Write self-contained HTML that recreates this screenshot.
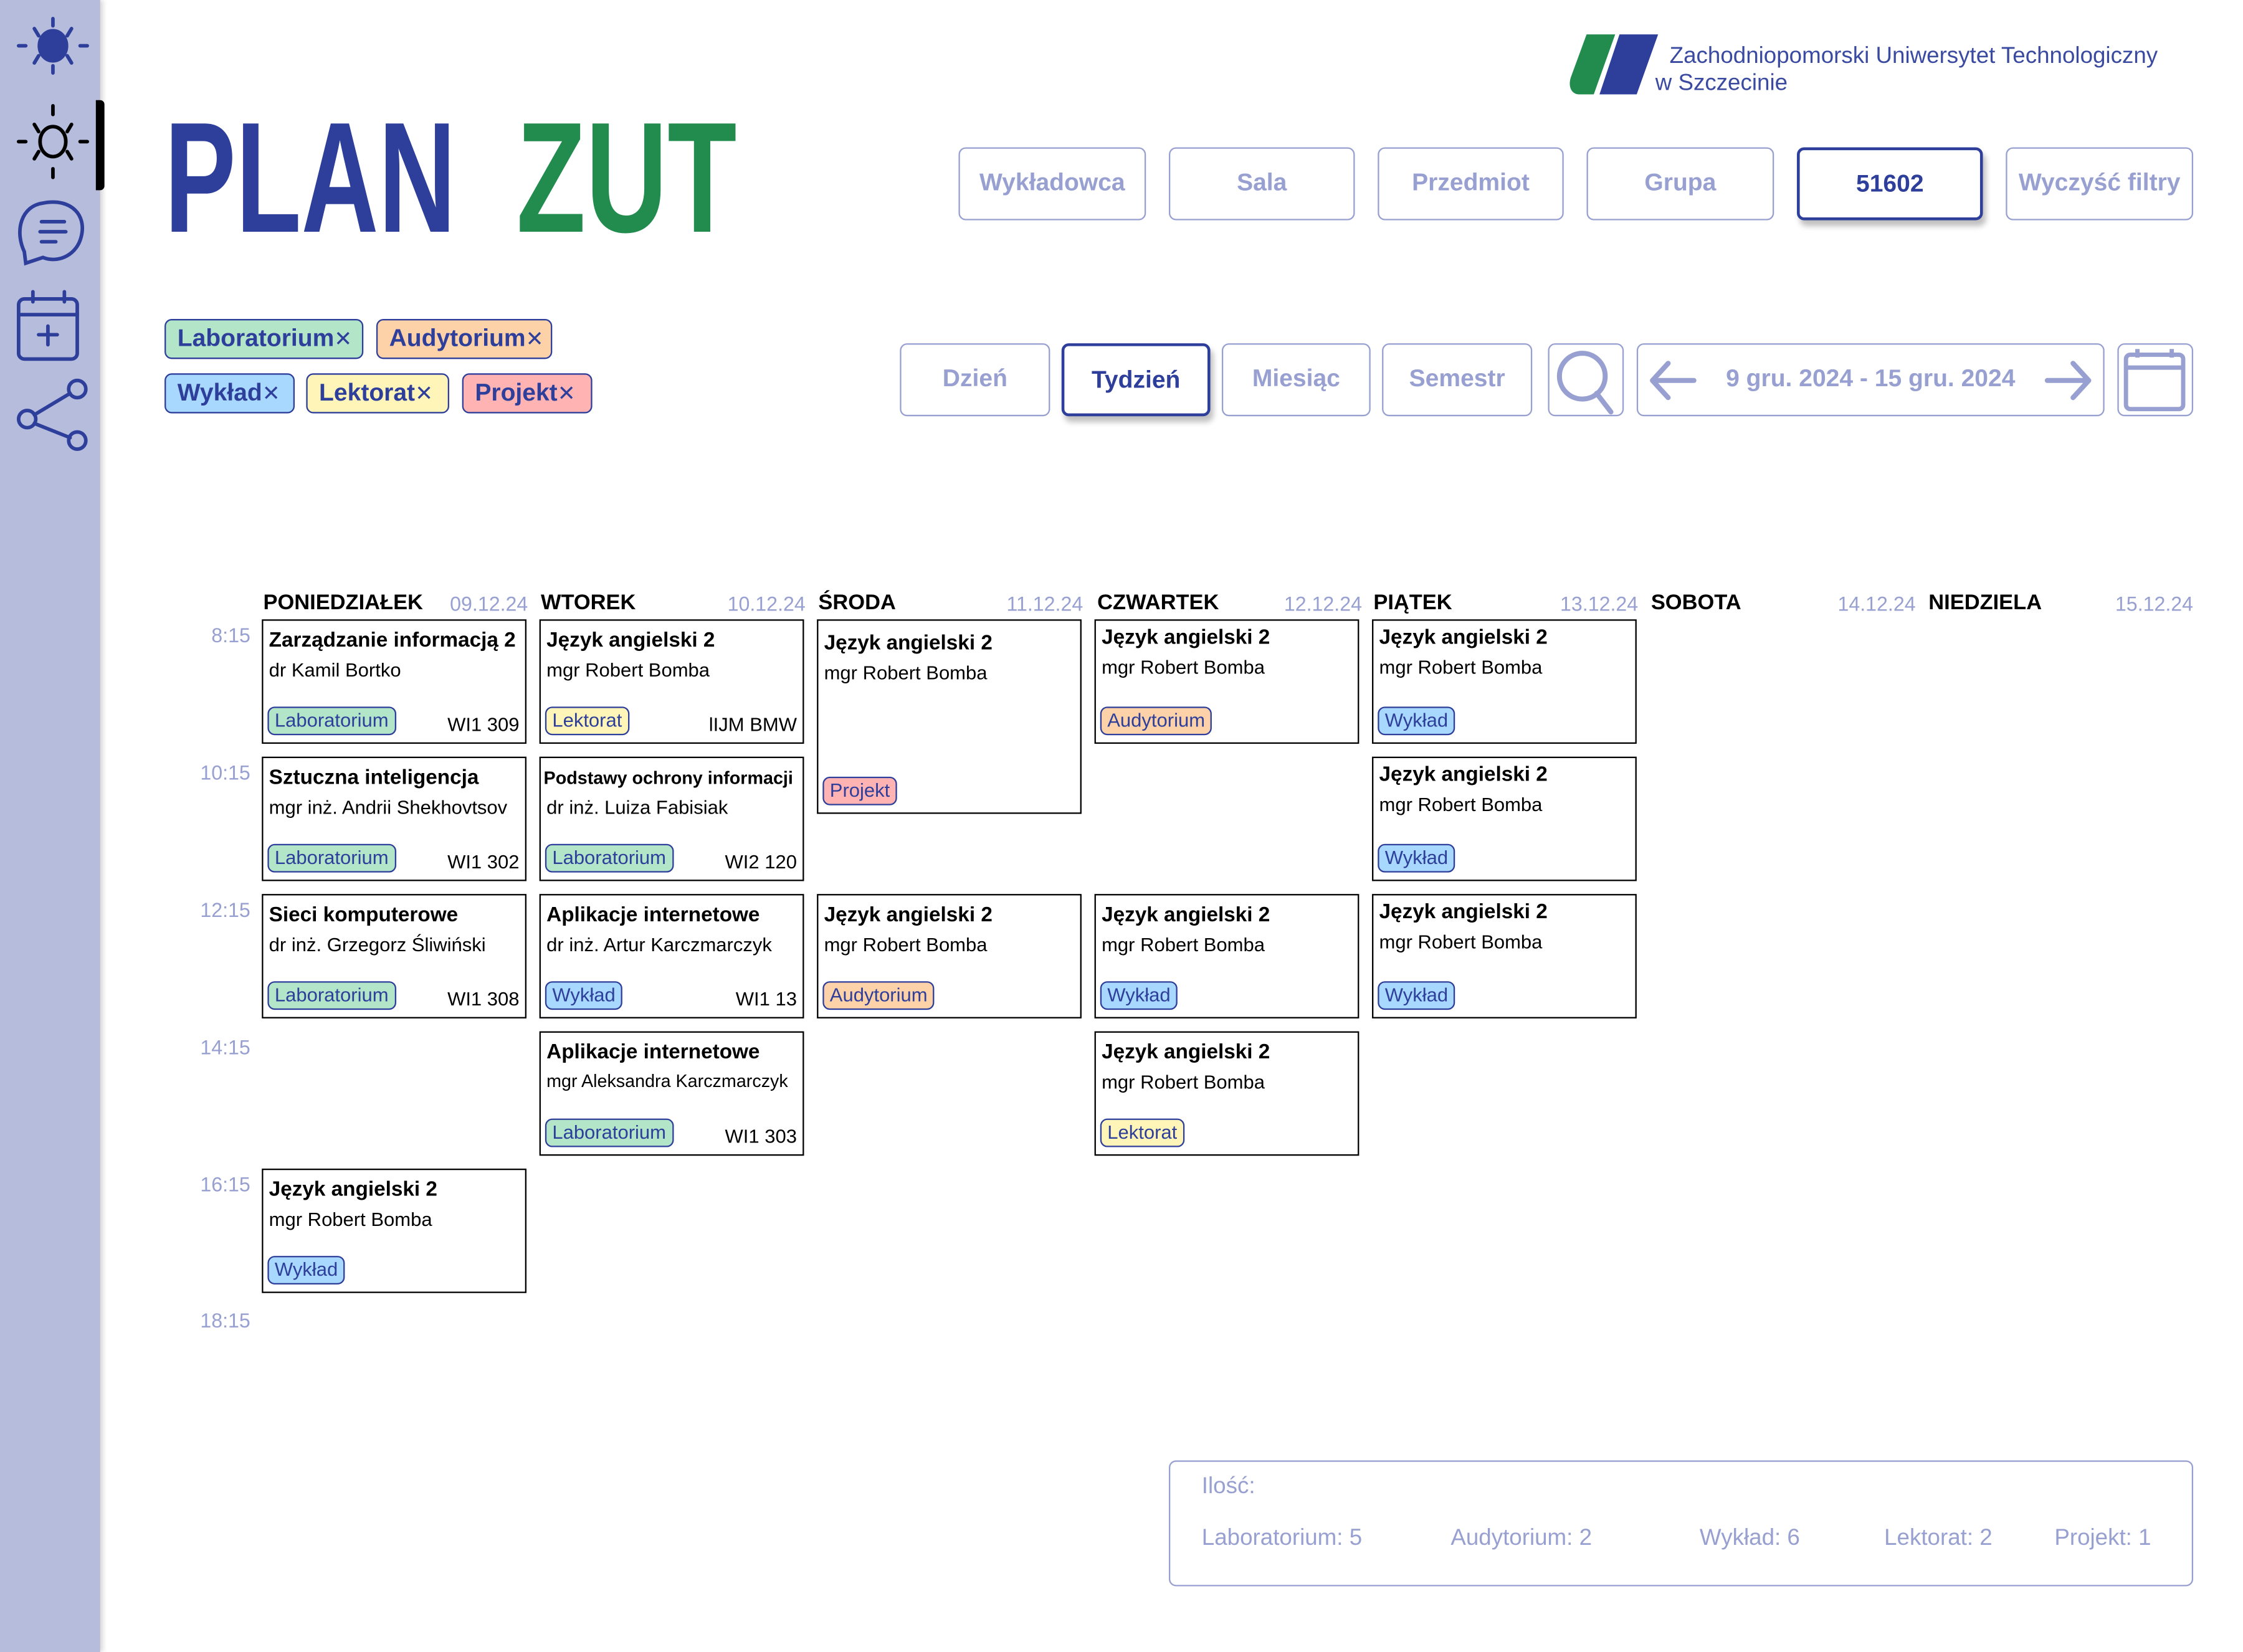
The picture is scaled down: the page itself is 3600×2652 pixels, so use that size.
<!DOCTYPE html>
<html><head><meta charset="utf-8">
<style>
html,body{margin:0;padding:0;background:#fff;width:3600px;height:2650px;overflow:hidden}
#w{position:absolute;left:0;top:0;width:1570px;height:1155px;transform:scale(2.2962);transform-origin:0 0;font-family:"Liberation Sans",sans-serif;}
.abs{position:absolute}
#side{position:absolute;left:0;top:0;width:70px;height:1155px;background:#b6bcdc;box-shadow:2px 0 3px rgba(0,0,0,.15)}
.chip{position:absolute;height:28px;border:1.5px solid #2e3f9b;border-radius:5px;box-sizing:border-box;color:#2e3f9b;font-weight:bold;font-size:17px;line-height:26px;padding-left:8px;white-space:nowrap}
.chip i{font-style:normal;font-weight:normal;font-size:15px}
.btn{position:absolute;height:51px;border:1.5px solid #97a0d0;border-radius:5px;box-sizing:border-box;color:#97a0d0;font-weight:bold;font-size:17px;line-height:48px;text-align:center;background:#fff}
.act{border:2.5px solid #2e3f9b;color:#2e3f9b;box-shadow:2px 4px 4px rgba(0,0,0,.25)}
.dh{position:absolute;top:413px;width:186px;font-size:15px;height:20px}
.dh b{position:absolute;left:1px;top:0;color:#000}
.dh span{position:absolute;right:0;top:1px;color:#97a0d0;font-size:14px}
.tm{position:absolute;left:120px;width:55px;text-align:right;color:#97a0d0;font-size:14px}
.card{position:absolute;width:185px;height:87px;border:1.5px solid #000;box-sizing:border-box;background:#fff}
.card .t{position:absolute;left:4px;top:6px;font-weight:bold;font-size:14.5px;white-space:nowrap;color:#000}
.card .s{position:absolute;left:4px;top:27px;font-size:13.5px;white-space:nowrap;color:#000}
.card .r{position:absolute;right:4px;bottom:5px;font-size:13.5px;color:#000}
.tag{position:absolute;left:3px;bottom:5px;height:20px;border:1.5px solid #2e3f9b;border-radius:5px;box-sizing:border-box;font-size:13.5px;line-height:18px;padding:0 4px;color:#2e3f9b}
.L{background:#b3e5c9}.A{background:#fdd2a8}.W{background:#a8d8fd}.K{background:#fff5b8}.P{background:#ffb3b3}
.sum{position:absolute;color:#97a0d0;font-size:16px}
</style></head><body><div id="w">
<div id="side">
<svg class="abs" style="left:10px;top:6px" width="54" height="310" viewBox="0 0 54 310" fill="none" stroke-linecap="round">
 <g stroke="#2e3f9b" stroke-width="2.5">
  <ellipse cx="27" cy="26" rx="9.5" ry="10.5" fill="#2e3f9b"/>
  <path d="M27 7v5M27 40v5M3 26h5M46 26h5M14 14l3 5M40 14l-3 5M14 38l3-5M40 38l-3-5"/>
 </g>
 <g stroke="#000" stroke-width="2.5">
  <ellipse cx="27" cy="93" rx="9" ry="10.5"/>
  <path d="M27 118v-6M27 68v6M3 93h5M46 93h5M14 81l3 5M40 81l-3 5M14 105l3-5M40 105l-3-5"/>
 </g>
 <g stroke="#2e3f9b" stroke-width="2.5">
  <path d="M7 170 C0 155 5 138 20 136 C40 132 52 145 46 162 C42 173 30 178 20 174 L8 178 Z"/>
  <path d="M19 149h16M18 156h18M19 163h10"/>
  <rect x="3" y="203" width="41" height="42" rx="4"/>
  <path d="M3 214h41M13 198v7M35 198v7M23.5 222v13M17 228h13"/>
  <circle cx="44" cy="266" r="6"/><circle cx="9" cy="287" r="6"/><circle cx="44" cy="302" r="6"/>
  <path d="M14 284l25-15M14 290l25 10"/>
 </g>
</svg>
<div class="abs" style="left:67px;top:70px;width:6px;height:63px;background:#000;border-radius:0 3px 3px 0"></div>
</div>

<div class="abs" style="left:115px;top:70px;height:110px;font-weight:bold;font-size:110px;line-height:110px;color:#2e3f9b;transform:scaleX(.68);transform-origin:0 0;white-space:nowrap">PLAN</div>
<div class="abs" style="left:361px;top:70px;height:110px;font-weight:bold;font-size:110px;line-height:110px;color:#218c4e;transform:scaleX(.72);transform-origin:0 0;white-space:nowrap">ZUT</div>

<div class="chip L" style="left:115px;top:223px;width:139px">Laboratorium<i>✕</i></div>
<div class="chip A" style="left:263px;top:223px;width:123px">Audytorium<i>✕</i></div>
<div class="chip W" style="left:115px;top:261px;width:91px">Wykład<i>✕</i></div>
<div class="chip K" style="left:214px;top:261px;width:100px">Lektorat<i>✕</i></div>
<div class="chip P" style="left:323px;top:261px;width:91px">Projekt<i>✕</i></div>

<svg class="abs" style="left:1096px;top:24px" width="64" height="42" viewBox="0 0 64 42">
 <path d="M13 0h20L18 42H8C2 42 0 36 2 30Z" fill="#218c4e"/>
 <path d="M36 0h27L48 42H22Z" fill="#2e3f9b"/>
</svg>
<div class="abs" style="left:1167px;top:31px;font-size:16px;color:#3a4aa0;white-space:nowrap">Zachodniopomorski Uniwersytet Technologiczny</div>
<div class="abs" style="left:1157px;top:50px;font-size:16px;color:#3a4aa0">w Szczecinie</div>

<div class="btn" style="left:670px;top:103px;width:131px">Wykładowca</div>
<div class="btn" style="left:817px;top:103px;width:130px">Sala</div>
<div class="btn" style="left:963px;top:103px;width:130px">Przedmiot</div>
<div class="btn" style="left:1109px;top:103px;width:131px">Grupa</div>
<div class="btn act" style="left:1256px;top:103px;width:130px">51602</div>
<div class="btn" style="left:1402px;top:103px;width:131px">Wyczyść filtry</div>

<div class="btn" style="left:629px;top:240px;width:105px">Dzień</div>
<div class="btn act" style="left:742px;top:240px;width:104px">Tydzień</div>
<div class="btn" style="left:854px;top:240px;width:104px">Miesiąc</div>
<div class="btn" style="left:966px;top:240px;width:105px">Semestr</div>
<div class="btn" style="left:1082px;top:240px;width:53px">
 <svg class="abs" style="left:2px;top:2px" width="48" height="48" viewBox="0 0 48 48" fill="none" stroke="#97a0d0" stroke-width="3.5" stroke-linecap="round"><circle cx="21" cy="20" r="16"/><path d="M31 32l10 13"/></svg></div>
<div class="btn" style="left:1144px;top:240px;width:327px">9 gru. 2024 - 15 gru. 2024
 <svg class="abs" style="left:6px;top:10px" width="36" height="30" viewBox="0 0 36 30" fill="none" stroke="#97a0d0" stroke-width="3.5" stroke-linecap="round" stroke-linejoin="round"><path d="M33 15H4M15 3L4 15l11 12"/></svg>
 <svg class="abs" style="right:6px;top:10px" width="36" height="30" viewBox="0 0 36 30" fill="none" stroke="#97a0d0" stroke-width="3.5" stroke-linecap="round" stroke-linejoin="round"><path d="M3 15h29M21 3l11 12-11 12"/></svg></div>
<div class="btn" style="left:1480px;top:240px;width:53px">
 <svg class="abs" style="left:2px;top:2px" width="46" height="46" viewBox="0 0 46 46" fill="none" stroke="#97a0d0" stroke-width="3"><rect x="3" y="5" width="40" height="38" rx="3"/><path d="M3 14h40M11 1v6M35 1v6"/></svg></div>

<div class="dh" style="left:183px"><b>PONIEDZIAŁEK</b><span>09.12.24</span></div>
<div class="dh" style="left:377px"><b>WTOREK</b><span>10.12.24</span></div>
<div class="dh" style="left:571px"><b>ŚRODA</b><span>11.12.24</span></div>
<div class="dh" style="left:766px"><b>CZWARTEK</b><span>12.12.24</span></div>
<div class="dh" style="left:959px"><b>PIĄTEK</b><span>13.12.24</span></div>
<div class="dh" style="left:1153px"><b>SOBOTA</b><span>14.12.24</span></div>
<div class="dh" style="left:1347px"><b>NIEDZIELA</b><span>15.12.24</span></div>

<div class="tm" style="top:436px">8:15</div>
<div class="tm" style="top:532px">10:15</div>
<div class="tm" style="top:628px">12:15</div>
<div class="tm" style="top:724px">14:15</div>
<div class="tm" style="top:820px">16:15</div>
<div class="tm" style="top:915px">18:15</div>

<div class="card" style="left:183px;top:433px"><div class="t">Zarządzanie informacją 2</div><div class="s">dr Kamil Bortko</div><div class="tag L">Laboratorium</div><div class="r">WI1 309</div></div>
<div class="card" style="left:183px;top:529px"><div class="t">Sztuczna inteligencja</div><div class="s">mgr inż. Andrii Shekhovtsov</div><div class="tag L">Laboratorium</div><div class="r">WI1 302</div></div>
<div class="card" style="left:183px;top:625px"><div class="t">Sieci komputerowe</div><div class="s">dr inż. Grzegorz Śliwiński</div><div class="tag L">Laboratorium</div><div class="r">WI1 308</div></div>
<div class="card" style="left:183px;top:817px"><div class="t">Język angielski 2</div><div class="s">mgr Robert Bomba</div><div class="tag W">Wykład</div></div>
<div class="card" style="left:377px;top:433px"><div class="t">Język angielski 2</div><div class="s">mgr Robert Bomba</div><div class="tag K">Lektorat</div><div class="r">lIJM BMW</div></div>
<div class="card" style="left:377px;top:529px"><div class="t" style="font-size:12.5px;left:2px;top:7px">Podstawy ochrony informacji</div><div class="s">dr inż. Luiza Fabisiak</div><div class="tag L">Laboratorium</div><div class="r">WI2 120</div></div>
<div class="card" style="left:377px;top:625px"><div class="t">Aplikacje internetowe</div><div class="s">dr inż. Artur Karczmarczyk</div><div class="tag W">Wykład</div><div class="r">WI1 13</div></div>
<div class="card" style="left:377px;top:721px"><div class="t">Aplikacje internetowe</div><div class="s" style="font-size:12.5px">mgr Aleksandra Karczmarczyk</div><div class="tag L">Laboratorium</div><div class="r">WI1 303</div></div>
<div class="card" style="left:571px;top:433px;height:136px"><div class="t" style="top:8px">Język angielski 2</div><div class="s" style="top:29px">mgr Robert Bomba</div><div class="tag P">Projekt</div></div>
<div class="card" style="left:571px;top:625px"><div class="t">Język angielski 2</div><div class="s">mgr Robert Bomba</div><div class="tag A">Audytorium</div></div>
<div class="card" style="left:765px;top:433px"><div class="t" style="top:4px">Język angielski 2</div><div class="s" style="top:25px">mgr Robert Bomba</div><div class="tag A">Audytorium</div></div>
<div class="card" style="left:765px;top:625px"><div class="t">Język angielski 2</div><div class="s">mgr Robert Bomba</div><div class="tag W">Wykład</div></div>
<div class="card" style="left:765px;top:721px"><div class="t">Język angielski 2</div><div class="s">mgr Robert Bomba</div><div class="tag K">Lektorat</div></div>
<div class="card" style="left:959px;top:433px"><div class="t" style="top:4px">Język angielski 2</div><div class="s" style="top:25px">mgr Robert Bomba</div><div class="tag W">Wykład</div></div>
<div class="card" style="left:959px;top:529px"><div class="t" style="top:4px">Język angielski 2</div><div class="s" style="top:25px">mgr Robert Bomba</div><div class="tag W">Wykład</div></div>
<div class="card" style="left:959px;top:625px"><div class="t" style="top:4px">Język angielski 2</div><div class="s" style="top:25px">mgr Robert Bomba</div><div class="tag W">Wykład</div></div>

<div class="abs" style="left:817px;top:1021px;width:716px;height:88px;border:1.5px solid #97a0d0;border-radius:5px;box-sizing:border-box"></div>
<div class="sum" style="left:840px;top:1031px">Ilość:</div>
<div class="sum" style="left:840px;top:1067px">Laboratorium: 5</div>
<div class="sum" style="left:1014px;top:1067px">Audytorium: 2</div>
<div class="sum" style="left:1188px;top:1067px">Wykład: 6</div>
<div class="sum" style="left:1317px;top:1067px">Lektorat: 2</div>
<div class="sum" style="left:1436px;top:1067px">Projekt: 1</div>
</div></body></html>
